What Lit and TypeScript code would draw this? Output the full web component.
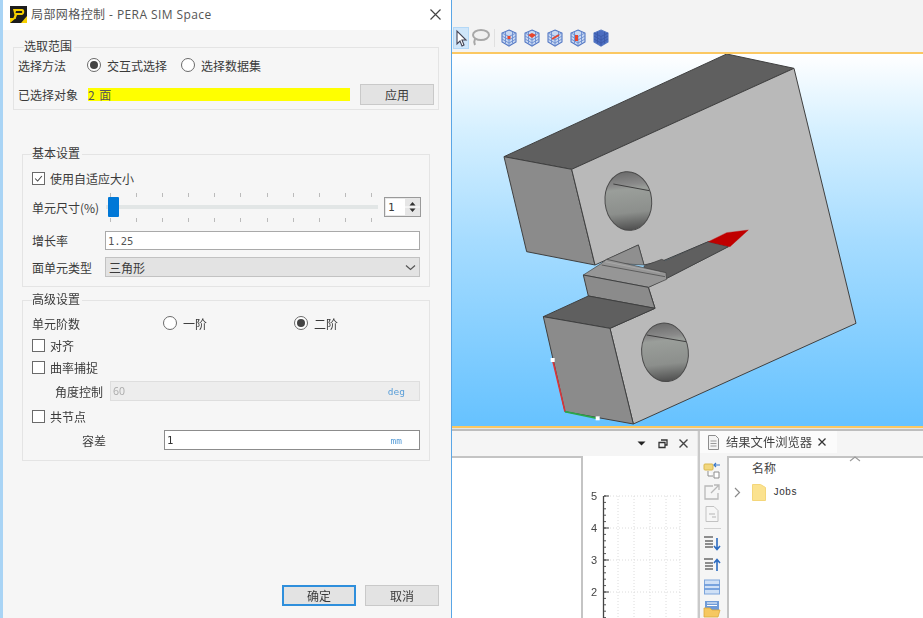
import { LitElement, html, css, svg } from "lit";
import { customElement } from "lit/decorators.js";

const cube = (mark: unknown, solid = false) => html`<svg class="cube" viewBox="0 0 18 18">
  <path d="M9 1l7 3v9l-7 4-7-4V4z" fill="${solid ? "#4a6cc0" : "#c9d9f2"}" stroke="#5478c4" stroke-width="1.100"/>
  <path d="M2 4l7 3.500 7-3.500M9 7.500V17M2 7l7 4 7-4M2 10l7 4 7-4M5.500 2.800v11.700M12.500 2.800v11.700" fill="none" stroke="${solid ? "#3c5aa8" : "#6a8cd0"}" stroke-width=".9"/>
  ${mark}
</svg>`;

@customElement("app-root")
export class AppRoot extends LitElement {
  static styles = css`
    :host { display: block; width: 923px; height: 618px; overflow: hidden; background: #f5f5f5; }
    * { box-sizing: border-box; }
    .page { display: flex; width: 923px; height: 618px; filter: blur(0.6px); font: 12px "Noto Sans CJK SC", "Liberation Sans", sans-serif; color: #3a3a3a; }
    .dialog { width: 452px; height: 618px; flex: none; display: flex; flex-direction: column; background: #f6f6f6; border-left: 3px solid #a9d4f5; border-right: 1px solid #5aa6e6; }
    .title { height: 30px; flex: none; background: #fff; display: flex; align-items: center; padding: 0 9px 2px 7px; }
    .title .txt { margin-left: 4px; font-family: "Open Sans", "Noto Sans CJK SC", sans-serif; font-size: 12px; color: #555; flex: 1; letter-spacing: .42px; }
    .group { border: 1px solid #e4e4e4; }
    .g1 { margin: 17px 0 0 10px; width: 426px; height: 63px; padding-left: 4px; }
    .g2 { margin: 44px 0 0 19px; width: 408px; height: 133px; padding-left: 9px; }
    .g3 { margin: 13px 0 0 19px; width: 408px; height: 161px; padding-left: 9px; }
    .legend { margin: -9px 0 0 6px; height: 14px; line-height: 14px; width: max-content; padding: 0 2px 0 0; background: #f6f6f6; }
    .g2 .legend, .g3 .legend { margin-left: 0; }
    .row { display: flex; align-items: center; height: 20px; }
    .check { width: 13px; height: 13px; border: 1px solid #6a6a6a; background: #fff; margin-right: 5px; flex: none; display: block; }
    .radio { width: 14px; height: 14px; border: 1px solid #6a6a6a; border-radius: 50%; background: #fff; flex: none; margin-right: 6px; display: grid; place-items: center; }
    .radio.on::after { content: ""; width: 8px; height: 8px; border-radius: 50%; background: #444; }
    .m1 { margin-top: 2px; }
    .label1 { width: 69px; }
    .choice { width: 74px; }
    .yellow { width: 262px; height: 13px; margin-left: 1px; background: #ffff00; line-height: 13px; color: #555; word-spacing: 2px; }
    .btn { background: #e3e3e3; border: 1px solid #c9c9c9; display: grid; place-items: center; height: 21px; width: 74px; flex: none; }
    .sel-row { margin-top: 9px; height: 21px; }
    .sel-row .btn { margin-left: 10px; }
    .auto { margin-top: 8px; }
    .slider-row { margin-top: 5px; height: 28px; display: flex; align-items: center; }
    .slider-row .lb { width: 73px; }
    .slider { width: 273px; height: 29px; display: flex; flex-direction: column; justify-content: space-between; position: relative; }
    .ticks { display: flex; justify-content: space-between; padding: 0 6px 0 5px; }
    .ticks i { width: 1px; height: 4px; background: #bbb; display: block; }
    .track { height: 4px; margin-left: 1px; background: #e2e6e6; position: relative; }
    .thumb { position: absolute; left: 2px; top: -8px; width: 11px; height: 20px; background: #0078d7; border-radius: 1px; }
    .spin { width: 37px; height: 20px; margin-left: 6px; border: 1px solid #9a9a9a; background: #fff; display: flex; font-family: "DejaVu Sans Mono", monospace; font-size: 11px; align-items: center; padding-left: 3px; box-shadow: inset 0 0 0 1px #e8e8e8; }
    .spin span { flex: 1; }
    .spin svg { width: 15px; height: 18px; background: #e6e6e6; flex: none; }
    .lab { width: 73px; flex: none; }
    .input { height: 19px; width: 315px; background: #fff; border: 1px solid #a9a9a9; display: flex; align-items: center; padding: 0 2px; font-family: "DejaVu Sans Mono", monospace; font-size: 10.500px; color: #555; }
    .input .unit { margin-left: auto; color: #5b9fd8; font-size: 9.500px; padding-right: 13px; }
    .select { height: 20px; width: 315px; background: #e3e3e3; border: 1px solid #c2c2c2; display: flex; align-items: center; justify-content: space-between; padding: 0 3px; }
    .growth { margin-top: 10px; height: 19px; }
    .stype { margin-top: 7px; height: 20px; }
    .order { margin-top: 7px; }
    .o1 { margin-left: 83px; width: 131px; display: flex; align-items: center; }
    .o2 { display: flex; align-items: center; }
    .ang { margin-top: 4px; padding-left: 23px; }
    .ang .lab { width: 55px; }
    .ang .input { width: 310px; height: 20px; background: #ededed; border-color: #dedede; font-family: "Open Sans", sans-serif; font-size: 10.500px; color: #aaa; }
    .ang .unit { padding-right: 12px; font-family: "DejaVu Sans Mono", monospace; }
    .tol { margin-top: 4px; padding-left: 50px; }
    .tol .lab { width: 82px; }
    .tol .input { width: 256px; height: 20px; border-color: #8c8c8c; color: #333; }
    .tol .unit { padding-right: 15px; }
    .n5 { margin-top: 5px; }
    .foot { margin-top: auto; display: flex; justify-content: flex-end; gap: 9px; padding: 0 12px 12px 0; }
    .btn.primary { border: 2px solid #2f8fdc; width: 74px; }
    .right { flex: 1; display: flex; flex-direction: column; min-width: 0; }
    .tools { height: 52px; flex: none; background: #f3f3f3; display: flex; align-items: center; padding: 24px 0 0 1px; }
    .cursor { width: 16px; height: 22px; background: #cfe6fa; border: 1px solid #b4d8f6; margin-right: 1px; display: grid; place-items: center; }
    .lasso { width: 20px; height: 20px; margin-right: 4px; }
    .tsep { width: 1px; height: 18px; background: #e0e0e0; margin-right: 3px; }
    .cube { width: 18px; height: 18px; margin: 0 3px 0 2px; display: block; }
    .orange { height: 2px; background: #fbc862; flex: none; }
    .view { height: 372px; flex: none; overflow: hidden; background: linear-gradient(#ffffff 0%, #d6f0ff 20%, #a6dcff 50%, #66c2ff 100%); }
    .view svg { display: block; width: 471px; height: 373px; }
    .line { height: 3px; flex: none; background: #bdbdbd; border-top: 1px solid #e6e6e6; }
    .panes { flex: 1; display: flex; min-height: 0; }
    .pane-l { width: 245px; flex: none; display: flex; flex-direction: column; }
    .phead { height: 25px; flex: none; display: flex; align-items: center; justify-content: flex-end; background: #f5f5f5; padding-right: 7px; gap: 8px; }
    .phead svg { width: 13px; height: 13px; }
    .pbody { flex: 1; display: flex; background: #fff; }
    .plot { width: 131px; border-top: 2px solid #c4c4c4; border-right: 2px solid #c4c4c4; background: #fff; }
    .chart { display: block; width: 114px; height: 162px; }
    .divider { width: 3px; flex: none; background: #c9c9c9; border-left: 1px solid #e8e8e8; }
    .pane-r { flex: 1; display: flex; flex-direction: column; min-width: 0; }
    .tabbar { height: 25px; flex: none; display: flex; background: #f5f5f5; }
    .tab { width: 137px; height: 22px; background: #fbfbfb; display: flex; align-items: center; padding-left: 7px; font-size: 12.300px; color: #444; }
    .tab .t { margin: 0 5px 0 6px; }
    .rbody { flex: 1; display: flex; min-height: 0; }
    .side { width: 27px; flex: none; background: #f5f5f5; display: flex; flex-direction: column; align-items: center; padding: 5px 3px 0 0; }
    .side svg { width: 18px; height: 18px; display: block; margin-bottom: 4px; flex: none; }
    .side hr { width: 17px; border: 0; height: 1px; background: #d0d0d0; margin: 1px 0 5px; flex: none; }
    .tree { flex: 1; background: #fff; border-left: 2px solid #c4c4c4; border-top: 2px solid #c4c4c4; padding-left: 23px; position: relative; }
    .hd { height: 20px; line-height: 20px; color: #444; }
    .caret { position: absolute; left: 120px; top: -3px; width: 12px; height: 8px; }
    .node { display: flex; align-items: center; margin: 5px 0 0 -18px; height: 18px; }
    .node .chev { width: 7px; height: 11px; margin-right: 11px; }
    .node .folder { width: 14px; height: 17px; margin-right: 7px; }
    .node .j { font-family: "Liberation Mono", monospace; font-size: 10px; color: #333; }
  `;

  private model() {
    const hole = (cx: number, cy: number, x1: number, y1: number, x2: number, y2: number) => svg`
      <ellipse cx=${cx} cy=${cy} rx="70" ry="88" transform="rotate(-6 ${cx} ${cy})" fill="url(#h1)" stroke="#4b4b4b" stroke-width="3"/>
      <line x1=${x1} y1=${y1} x2=${x2} y2=${y2} stroke="#3f3f3f" stroke-width="3"/>`;
    return html`<svg viewBox="452 54 471 373">
      <defs>
        <linearGradient id="h1" x1="0" y1="0" x2="0" y2="1">
          <stop offset="0" stop-color="#6c6c6c"/><stop offset=".22" stop-color="#8a8a8a"/><stop offset=".3" stop-color="#9a9e9a"/>
          <stop offset=".7" stop-color="#8c8f8c"/><stop offset="1" stop-color="#4f4f4f"/>
        </linearGradient>
      </defs>
      <g transform="translate(500 50) scale(.33333)" stroke="#3f3f3f" stroke-width="3" stroke-linejoin="round">
        <polygon points="12,320 680,12 882,55 215,358" fill="#5f5f5f"/>
        <polygon points="12,320 215,358 285,645 80,605" fill="#8b8b8b"/>
        <polygon points="215,358 882,55 1068,820 400,1122 330,835 465,775 445,712 500,685 685,590 625,575 490,632 432,645 415,585 285,645" fill="#b9b9b9"/>
        <polygon points="320,628 415,585 432,645 345,640" fill="#8f8f8f" stroke-width="2"/>
        <polygon points="432,648 485,628 495,632 625,575 685,590 500,685 440,700" fill="#5f5f5f" stroke-width="2"/>
        <polygon points="625,575 680,548 745,540 690,590" fill="#c00000" stroke="#c00000" stroke-width="1"/>
        <polygon points="250,675 300,643 320,628 498,668 500,688 445,712" fill="#969696" stroke-width="2"/>
        <line x1="305" y1="645" x2="495" y2="680" stroke-width="2"/>
        <line x1="315" y1="635" x2="480" y2="668" stroke="#b0b0b0" stroke-width="2"/>
        <polygon points="250,675 445,712 465,775 265,738" fill="#8b8b8b"/>
        <polygon points="130,800 265,738 465,775 330,835" fill="#5f5f5f"/>
        <polygon points="130,800 330,835 400,1122 195,1085" fill="#8b8b8b"/>
        ${hole(385, 453, 340, 402, 448, 422)}
        ${hole(495, 907, 440, 855, 558, 875)}
        <line x1="158" y1="930" x2="195" y2="1085" stroke="#d9363a" stroke-width="5"/>
        <line x1="195" y1="1085" x2="292" y2="1105" stroke="#2aa84a" stroke-width="5"/>
        <rect x="152" y="924" width="12" height="12" fill="#fff" stroke="none"/>
        <rect x="287" y="1099" width="12" height="12" fill="#fff" stroke="none"/>
      </g>
    </svg>`;
  }

  private chart() {
    const labels = [["5", 40], ["4", 72], ["3", 104], ["2", 136]] as [string, number][];
    const minors: number[] = [];
    for (let y = 40; y <= 162; y += 6.4) minors.push(y);
    return html`<svg class="chart" viewBox="0 0 114 162">
      ${[35, 51, 67, 83, 97].map((x) => svg`<line x1=${x} y1="40" x2=${x} y2="162" stroke="#dcdcdc" stroke-dasharray="1 2"/>`)}
      ${labels.map(([, y]) => svg`<line x1="21" y1=${y} x2="97" y2=${y} stroke="#dcdcdc" stroke-dasharray="1 2"/>`)}
      <line x1="20.500" y1="40" x2="20.500" y2="162" stroke="#444" stroke-width="1.300"/>
      ${minors.map((y) => svg`<line x1="21" y1=${y} x2="23" y2=${y} stroke="#555"/>`)}
      ${labels.map(([, y]) => svg`<line x1="21" y1=${y} x2="26" y2=${y} stroke="#444"/>`)}
      ${labels.map(([t, y]) => svg`<text x="11" y=${y + 4} font-size="11" fill="#444" text-anchor="middle" font-family="Liberation Sans, sans-serif">${t}</text>`)}
    </svg>`;
  }

  render() {
    const ticks = html`<div class="ticks">${Array.from({ length: 11 }, () => html`<i></i>`)}</div>`;
    const dot = (p: string) => svg`<path d=${p} fill="#e8452c"/>`;
    return html`<div class="page">
      <section class="dialog">
        <div class="title">
          <svg width="17" height="17" viewBox="0 0 17 17">
            <rect width="17" height="17" fill="#1d1d1d"/>
            <path d="M0 17l6-5H0zM11 17l6-7v7z" fill="#f7d000"/>
            <path d="M3 3h9c3 0 3 5 0 6H7l-1.500 4H3l1.500-4M6 5l-.5 2h6c1 0 1-2 0-2z" fill="#f7d000" fill-rule="evenodd"/>
          </svg>
          <span class="txt">局部网格控制 - PERA SIM Space</span>
          <svg width="13" height="13" viewBox="0 0 13 13"><path d="M1.500 1.500l10 10M11.500 1.500l-10 10" stroke="#444" stroke-width="1.200"/></svg>
        </div>

        <div class="group g1">
          <div class="legend">选取范围</div>
          <div class="row m1">
            <span class="label1">选择方法</span>
            <span class="radio on"></span><span class="choice">交互式选择</span>
            <span class="radio"></span><span>选择数据集</span>
          </div>
          <div class="row sel-row">
            <span class="label1">已选择对象</span>
            <span class="yellow">2 面</span>
            <span class="btn">应用</span>
          </div>
        </div>

        <div class="group g2">
          <div class="legend">基本设置</div>
          <div class="row auto">
            <svg class="check" viewBox="0 0 13 13"><path d="M2.500 6.500l3 3 5-6" fill="none" stroke="#444" stroke-width="1.200"/></svg>
            <span>使用自适应大小</span>
          </div>
          <div class="slider-row">
            <span class="lb">单元尺寸(%)</span>
            <div class="slider">
              ${ticks}
              <div class="track"><div class="thumb"></div></div>
              ${ticks}
            </div>
            <div class="spin"><span>1</span>
              <svg viewBox="0 0 15 18"><path d="M7.500 4l3 3.500h-6zM7.500 14l3-3.500h-6z" fill="#333"/><path d="M0 9h15" stroke="#fff"/></svg>
            </div>
          </div>
          <div class="row growth"><span class="lab">增长率</span><div class="input">1.25</div></div>
          <div class="row stype"><span class="lab">面单元类型</span>
            <div class="select"><span>三角形</span>
              <svg width="11" height="7" viewBox="0 0 11 7"><path d="M1 1.500l4.500 4 4.500-4" fill="none" stroke="#555" stroke-width="1.200"/></svg>
            </div>
          </div>
        </div>

        <div class="group g3">
          <div class="legend">高级设置</div>
          <div class="row order"><span>单元阶数</span>
            <span class="o1"><span class="radio"></span>一阶</span>
            <span class="o2"><span class="radio on"></span>二阶</span>
          </div>
          <div class="row m1"><span class="check"></span>对齐</div>
          <div class="row m1"><span class="check"></span>曲率捕捉</div>
          <div class="row ang"><span class="lab">角度控制</span><div class="input">60<span class="unit">deg</span></div></div>
          <div class="row n5"><span class="check"></span>共节点</div>
          <div class="row tol"><span class="lab">容差</span><div class="input">1<span class="unit">mm</span></div></div>
        </div>

        <div class="foot">
          <span class="btn primary">确定</span>
          <span class="btn">取消</span>
        </div>
      </section>

      <section class="right">
        <div class="tools">
          <div class="cursor"><svg width="14" height="18" viewBox="0 0 14 18"><path d="M3 2v13l3-3 2 5 2-1-2-5h4z" fill="#fff" stroke="#445" stroke-width="1.100"/></svg></div>
          <svg class="lasso" viewBox="0 0 20 20"><ellipse cx="11" cy="7" rx="8" ry="5" fill="#f0f0f0" stroke="#a8a8a8" stroke-width="2"/><path d="M5 11c-1 2-1 4 0 6" fill="none" stroke="#a8a8a8" stroke-width="2"/></svg>
          <span class="tsep"></span>
          ${cube(dot("M7.500 7h3v3h-3z"))}
          ${cube(dot("M5 6l4-2 4 2-4 3z"))}
          ${cube(svg`<path d="M6 10l7-4" stroke="#e8452c" stroke-width="1.800"/>`)}
          ${cube(dot("M6 6h3v6H6z"))}
          ${cube("", true)}
        </div>
        <div class="orange"></div>
        <div class="view">${this.model()}</div>
        <div class="orange"></div>
        <div class="line"></div>
        <div class="panes">
          <div class="pane-l">
            <div class="phead">
              <svg viewBox="0 0 13 13"><path d="M2.500 4.500h8L6.500 8.500z" fill="#222"/></svg>
              <svg viewBox="0 0 13 13"><path d="M5 3h6v5h-2M3 5.500h6v5H3z" fill="none" stroke="#333" stroke-width="1.300"/></svg>
              <svg viewBox="0 0 13 13"><path d="M2.500 2.500l8 8M10.500 2.500l-8 8" stroke="#444" stroke-width="1.400"/></svg>
            </div>
            <div class="pbody">
              <div class="plot"></div>
              ${this.chart()}
            </div>
          </div>
          <div class="divider"></div>
          <div class="pane-r">
            <div class="tabbar">
              <div class="tab">
                <svg width="13" height="15" viewBox="0 0 13 15"><path d="M1.500.5h7l3 3v11h-10z" fill="#f4f4f4" stroke="#8d8d8d"/><path d="M3.500 6h6M3.500 8.500h6M3.500 11h6" stroke="#9a9a9a"/></svg>
                <span class="t">结果文件浏览器</span>
                <svg width="10" height="10" viewBox="0 0 10 10"><path d="M1.500 1.500l7 7M8.500 1.500l-7 7" stroke="#333" stroke-width="1.300"/></svg>
              </div>
            </div>
            <div class="rbody">
              <div class="side">
                <svg viewBox="0 0 18 18"><rect x="1" y="3" width="9" height="6" rx="1" fill="#f2d77e" stroke="#d9b84f"/><path d="M11 4h6M13 2l-2 2 2 2" fill="none" stroke="#3a78c8" stroke-width="1.200"/><path d="M5 10v5h5M11 11h5v6h-5z" fill="#fff" stroke="#8d8d8d"/></svg>
                <svg viewBox="0 0 18 18"><path d="M10 3H2v13h13v-6" fill="none" stroke="#b8b8b8" stroke-width="1.300"/><path d="M8 10l8-8M11 2h5v5" fill="none" stroke="#b8b8b8" stroke-width="1.300"/></svg>
                <svg viewBox="0 0 18 18"><path d="M3 1.500h8l4 4v11H3z" fill="#f6f6f6" stroke="#c2c2c2"/><path d="M6 9h6M9 12h4" stroke="#b5b5b5"/></svg>
                <hr />
                <svg viewBox="0 0 18 18"><path d="M1 3h9M2 7h8M2 10h8M2 13h8" stroke="#6b6b6b" stroke-width="1.300"/><path d="M14 4v11M11 12l3 3.500 3-3.500" fill="none" stroke="#2c6bc0" stroke-width="1.600"/></svg>
                <svg viewBox="0 0 18 18"><path d="M1 3h9M2 7h8M2 10h8M2 13h8" stroke="#6b6b6b" stroke-width="1.300"/><path d="M14 15V4M11 7l3-3.500L17 7" fill="none" stroke="#2c6bc0" stroke-width="1.600"/></svg>
                <svg viewBox="0 0 18 18"><rect x="1.500" y="2" width="15" height="14" fill="#cfe0f6" stroke="#7ea6dc"/><path d="M1.500 7h15M1.500 11h15" stroke="#5c8fd6" stroke-width="1.500"/></svg>
                <svg viewBox="0 0 18 18"><rect x="2" y="1" width="14" height="9" fill="#6f9bd8"/><path d="M4 3h10M4 5.500h10" stroke="#fff"/><path d="M1 8h6l2 2h8l-2 7H1z" fill="#f6c860" stroke="#dca83c" stroke-width=".8"/></svg>
              </div>
              <div class="tree">
                <svg class="caret" viewBox="0 0 12 8"><path d="M1 6l5-4 5 4" fill="none" stroke="#9a9a9a" stroke-width="1.100"/></svg>
                <div class="hd">名称</div>
                <div class="node">
                  <svg class="chev" viewBox="0 0 7 11"><path d="M1 1l4.500 4.500L1 10" fill="none" stroke="#8a8a8a" stroke-width="1.200"/></svg>
                  <svg class="folder" viewBox="0 0 14 17"><path d="M.5.500h8l5 3v13H.5z" fill="#fbe28f" stroke="#f4d67a"/></svg>
                  <span class="j">Jobs</span>
                </div>
              </div>
            </div>
          </div>
        </div>
      </section>
    </div>`;
  }
}
